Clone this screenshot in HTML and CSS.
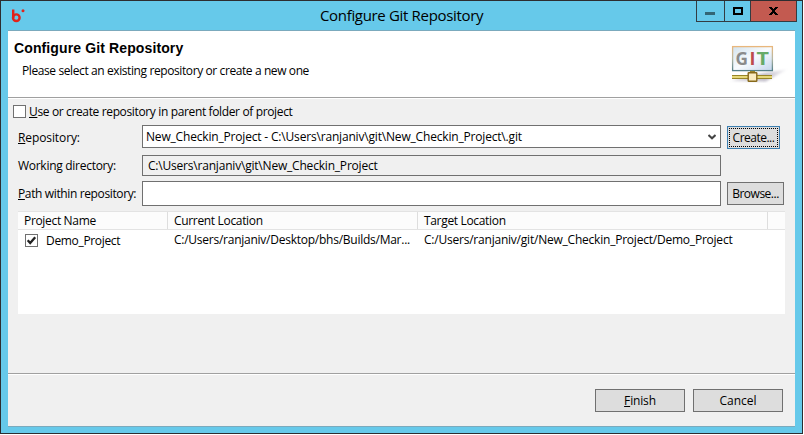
FILE: index.html
```html
<!DOCTYPE html>
<html lang="en">
<head>
<meta charset="utf-8">
<title>Configure Git Repository</title>
<link rel="stylesheet" href="styles.css">
</head>
<body>
<div class="window">
  <header class="titlebar">
    <svg class="logo" width="14" height="14" viewBox="0 0 14 14"><path d="M2.2 0.5V9" stroke="#e2231a" stroke-width="2.4" fill="none"/><circle cx="5.3" cy="8.7" r="3.3" stroke="#e2231a" stroke-width="2.4" fill="none"/><circle cx="12" cy="1.8" r="1.5" fill="#e2231a"/></svg>
    <h1 class="caption"><span class="t-caption">Configure Git Repository</span></h1>
    <div class="controls">
      <span class="control min"><svg width="10" height="3"><path d="M0 0H10V3H0Z" fill="#336675"/></svg></span>
      <span class="control max"><svg width="10" height="8"><path d="M1 1H9V7H1Z" fill="none" stroke="#000" stroke-width="2"/></svg></span>
      <span class="control close"><svg width="9" height="8" viewBox="0 0 9 8" shape-rendering="crispEdges"><path d="M0 0H3V1H4V2H5V1H6V0H9V1H8V2H7V3H6V5H7V6H8V7H9V8H6V7H5V6H4V7H3V8H0V7H1V6H2V5H3V3H2V2H1V1H0Z"/></svg></span>
    </div>
  </header>
  <main class="dialog">
    <section class="banner">
      <div>
        <h2 class="heading"><span class="t-heading">Configure Git Repository</span></h2>
        <p class="message"><span class="t-message">Please select an existing repository or create a new one</span></p>
      </div>
      <svg class="git" width="60" height="40" viewBox="0 0 60 40">
        <defs>
          <linearGradient id="board" x1="0" y1="0" x2="1" y2="1"><stop offset="0" stop-color="#d3e3ee"/><stop offset=".5" stop-color="#f8fbfe"/><stop offset="1" stop-color="#c3d5ec"/></linearGradient>
          <linearGradient id="frame" x1="0" y1="0" x2="0" y2="1"><stop offset="0" stop-color="#e9b77c"/><stop offset=".5" stop-color="#b5b7a4"/><stop offset="1" stop-color="#547f88"/></linearGradient>
          <linearGradient id="shade" x1="0" y1="0" x2="1" y2="0"><stop offset="0" stop-color="#a9a3b5" stop-opacity=".35"/><stop offset=".6" stop-color="#a9a3b5" stop-opacity=".7"/><stop offset="1" stop-color="#a9a3b5" stop-opacity=".1"/></linearGradient>
          <filter id="soft"><feGaussianBlur stdDeviation="1"/></filter>
        </defs>
        <path d="M3 36L20 31L42 27L59 24.5L38 36.5Z" fill="url(#shade)" filter="url(#soft)"/>
        <rect x="4.6" y="1.6" width="39.8" height="24" fill="url(#board)" stroke="url(#frame)" stroke-width="1.3"/>
        <g class="git-letters"><text x="7.5" y="20" fill="#8b8b8b" textLength="12.5" lengthAdjust="spacingAndGlyphs">G</text><text x="21.6" y="20" fill="#bd4b4d">I</text><text x="28.5" y="20" fill="#66ab68" textLength="12.5" lengthAdjust="spacingAndGlyphs">T</text></g>
        <path d="M22 26H27V28H22Z" fill="#9a872c"/>
        <path d="M4 30H44V34H4Z" fill="#988628"/><path d="M4 31H44V33H4Z" fill="#e6d879"/>
        <rect x="20.2" y="27.7" width="8.6" height="8.6" rx=".6" fill="#faecc0" stroke="#87691a" stroke-width="1.4"/>
      </svg>
    </section>
    <section class="body">
      <label class="check"><span class="box"></span><span class="t-check"><u>U</u>se or create repository in parent folder of project</span></label>
      <div class="form">
        <label class="lab"><span class="t-repo"><u>R</u>epository:</span></label>
        <div class="field combo"><span class="t-combo">New_Checkin_Project - C:\Users\ranjaniv\git\New_Checkin_Project\.git</span><svg width="8" height="6" viewBox="0 0 8 6"><path d="M.5 1L4 4.3L7.5 1" fill="none" stroke="#444" stroke-width="2"/></svg></div>
        <button class="btn create"><span class="t-create">Create...</span></button>
        <label class="lab second"><span class="t-work">Working directory:</span></label>
        <div class="field readonly"><span class="t-dir">C:\Users\ranjaniv\git\New_Checkin_Project</span></div>
        <span></span>
        <label class="lab"><span class="t-path"><u>P</u>ath within repository:</span></label>
        <div class="field entry"></div>
        <button class="btn browse"><span class="t-browse">Browse...</span></button>
      </div>
      <div class="table">
        <div class="row head"><span class="cell"><span class="t-name">Project Name</span></span><span class="cell"><span class="t-current">Current Location</span></span><span class="cell"><span class="t-target">Target Location</span></span><span></span></div>
        <div class="row item"><span class="cell first"><span class="box"><svg width="11" height="11" viewBox="0 0 11 11"><path d="M1.7 5.2L4.2 8L9.2 2.2" fill="none" stroke="#222" stroke-width="2.3"/></svg></span><span class="t-demo">Demo_Project</span></span><span class="cell"><span class="t-from">C:/Users/ranjaniv/Desktop/bhs/Builds/Mar...</span></span><span class="cell"><span class="t-to">C:/Users/ranjaniv/git/New_Checkin_Project/Demo_Project</span></span></div>
      </div>
    </section>
    <footer class="footer">
      <button class="btn wide"><span class="t-finish"><u>F</u>inish</span></button>
      <button class="btn wide"><span class="t-cancel">Cancel</span></button>
    </footer>
  </main>
</div>
</body>
</html>
```
FILE: styles.css
```css
* { box-sizing: border-box; }
body { margin: 0; background: #fff; font: 12px/16px "Open Sans", "Noto Sans", sans-serif; color: #000; overflow: hidden; }
h1, h2, p { margin: 0; font-weight: normal; }
span { white-space: nowrap; }
svg { display: block; flex: none; }
u { text-underline-offset: 1px; text-decoration-thickness: 1px; text-decoration-skip-ink: none; }

.window { width: 803px; height: 434px; border: 1px solid #2d2d30; background: #66c9ea; padding: 0 7px 7px 7px; }
.titlebar { height: 29px; display: grid; grid-template-columns: 14px 1fr 101px; align-items: start; margin-right: -2px; }
.logo { margin: 8px 0 0 3px; }
.caption { font-size: 15px; line-height: 20px; padding: 4px 0 0 298px; }
.controls { display: flex; height: 21px; border: 1px solid #333c42; border-top: 0; }
.control { display: flex; align-items: flex-start; }
.min { width: 28px; padding: 11px 0 0 8px; border-right: 1px solid #333c42; }
.max { width: 26px; padding: 6px 0 0 8px; border-right: 1px solid #333c42; }
.close { flex: 1; padding: 6px 0 0 18px; background: #c35a50; }

.dialog { height: 397px; border: 1px solid #7baabd; border-width: 1px 0; background: #f0f0f0; display: flex; flex-direction: column; }
.banner { height: 68px; background: #fff; display: flex; justify-content: space-between; padding: 9px 7px 0 6px; border-bottom: 1px solid #fff; box-shadow: inset 0 -1px #a0a0a0; flex: none; }
.heading { font: bold 14px/16px "Liberation Sans", sans-serif; }
.message { padding: 7px 0 0 8px; }
.git { margin-top: 5px; }
.git-letters { font: bold 18px "Open Sans", sans-serif; }

.body { flex: 1; padding: 6px 10px 0; }
.check { display: flex; height: 13px; align-items: center; margin-left: -5px; gap: 3px; }
.box { width: 13px; height: 13px; border: 1px solid #707070; background: #fff; flex: none; }
.form { display: grid; grid-template-columns: 124px 579px 1fr; grid-template-rows: 30px 26px 25px; margin-top: 7px; align-items: start; }
.lab { line-height: 26px; }
.second { line-height: 22px; }
.field { border: 1px solid #707070; display: flex; align-items: center; padding: 0 4px; }
.combo { height: 23px; background: #fff; justify-content: space-between; padding-left: 3px; }
.readonly { height: 21px; padding-left: 5px; }
.entry { height: 25px; background: #fff; }
.btn { font: inherit; color: inherit; height: 23px; margin: 0; padding: 0; border: 1px solid #707070; background: #ddd; display: flex; align-items: center; justify-content: center; }
.create { width: 53px; margin: 1px 0 0 6px; border-color: #3c7fb1; outline: 1px dotted #000; outline-offset: -3px; }
.browse { width: 57px; margin: 1px 0 0 6px; }

.table { height: 103px; width: 767px; margin-top: 5px; background: #fff; }
.row { display: grid; grid-template-columns: 150px 250px 350px 1fr; height: 19px; }
.head { background: #fcfcfc; border: solid #e3e3e3; border-width: 1px 0; }
.cell { padding-left: 6px; line-height: 17px; }
.head .cell { border-right: 1px solid #dedede; }
.item { height: 20px; }
.item .cell { line-height: 19px; }
.first { display: flex; align-items: center; gap: 8px; padding-left: 7px; }
.first .box { margin-top: 1px; }

.footer { height: 53px; border-top: 1px solid #a0a0a0; box-shadow: inset 0 1px #fff; display: flex; justify-content: flex-end; gap: 8px; padding: 15px 12px 0; flex: none; }
.wide { width: 90px; }

/* Tracking that fits each label to the dialog's native text widths */
.t-caption { letter-spacing: -.33px; }
.t-heading { letter-spacing: .12px; }
.t-message { letter-spacing: -.4px; }
.t-check { letter-spacing: -.36px; }
.t-repo { letter-spacing: -.1px; }
.t-combo { letter-spacing: -.18px; }
.t-work { letter-spacing: -.28px; }
.t-dir { letter-spacing: -.2px; }
.t-path { letter-spacing: -.37px; }
.t-name, .t-current, .t-target, .t-demo { letter-spacing: -.33px; }
.t-from { letter-spacing: -.25px; }
.t-to { letter-spacing: -.22px; }
.t-create, .t-browse { letter-spacing: -.5px; }
.t-finish { letter-spacing: -.15px; }
```
